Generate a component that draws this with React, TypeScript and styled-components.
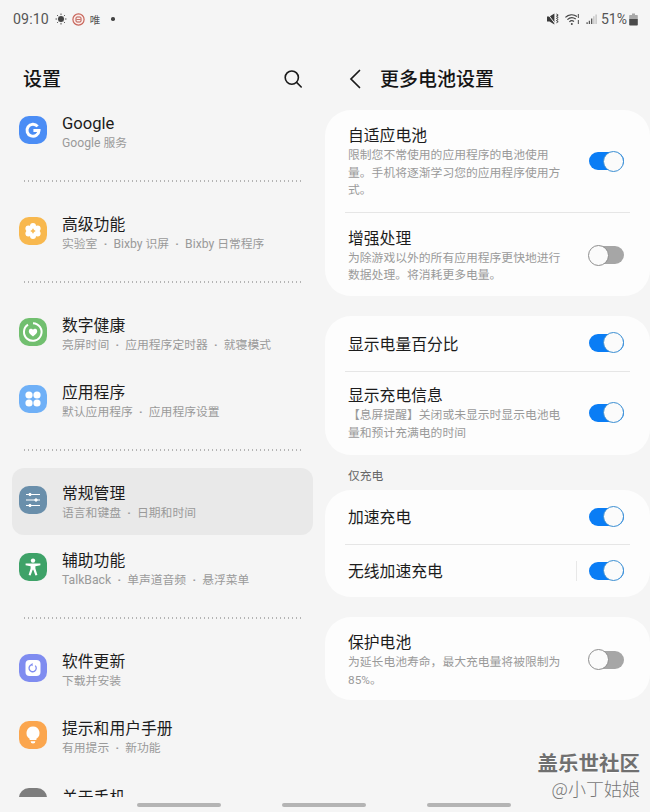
import React from "react";
import styled, { createGlobalStyle } from "styled-components";

const Global = createGlobalStyle`
  html, body { margin: 0; padding: 0; background: #f5f5f5; }
  body { font-family: Roboto, "Noto Sans CJK SC", sans-serif; }
  * { box-sizing: border-box; }
`;

const Page = styled.div`
  position: relative;
  width: 650px;
  height: 812px;
  display: flex;
  flex-direction: column;
  overflow: hidden;
  background: #f5f5f5;
`;

const StatusBar = styled.div`
  height: 38px;
  flex: none;
  display: flex;
  align-items: center;
  justify-content: space-between;
  padding: 0 12px 0 13px;
  color: #555;
`;
const StatusGroup = styled.div`
  display: flex;
  align-items: center;
`;
const Time = styled.span`
  font-size: 14.2px;
  letter-spacing: 0.1px;
  margin-right: 6px;
`;
const StatusChar = styled.span`
  font-size: 10.5px;
  font-family: "Noto Sans CJK SC", sans-serif;
  margin-left: 5px;
  color: #555;
`;
const Percent = styled.span`
  font-size: 14px;
  margin: 0 2px 0 4px;
`;
const StatusDot = styled.span`
  width: 3.5px;
  height: 3.5px;
  border-radius: 50%;
  background: #444;
  margin-left: 11px;
`;
const StatusIcon = styled.svg<{ $gap?: number }>`
  display: block;
  flex: none;
  margin-left: ${(p) => p.$gap ?? 0}px;
`;

const Panels = styled.div`
  flex: 1;
  min-height: 0;
  display: grid;
  grid-template-columns: 325px 325px;
  overflow: hidden;
`;
const Column = styled.div`
  display: flex;
  flex-direction: column;
  min-height: 0;
`;
const Header = styled.header`
  flex: none;
  height: 38px;
  margin-top: 22px;
  display: flex;
  align-items: center;
`;
const MainHeader = styled(Header)`
  padding: 0 22px 0 23px;
  justify-content: space-between;
`;
const DetailHeader = styled(Header)`
  padding-left: 24px;
  gap: 19px;
`;
const PageTitle = styled.h1`
  margin: 0 0 4px;
  font-family: "Noto Sans CJK SC", sans-serif;
  font-size: 19px;
  font-weight: 500;
  color: #151515;
`;

const MenuList = styled.div`
  padding: 0 12px;
  display: flex;
  flex-direction: column;
`;
const MenuRow = styled.div<{ $active?: boolean }>`
  flex: none;
  height: 67px;
  display: flex;
  align-items: center;
  gap: 15px;
  padding-left: 7px;
  border-radius: 12px;
  background: ${(p) => (p.$active ? "#e9e9e9" : "transparent")};
`;
const MenuText = styled.div`
  display: flex;
  flex-direction: column;
  min-height: 38px;
  padding-top: 3px;
`;
const MenuTitle = styled.div`
  font-size: 15.8px;
  line-height: 20px;
  color: #1c1c1c;
`;
const MenuSub = styled.div`
  font-size: 11.8px;
  line-height: 18px;
  color: #9a9a9a;
  white-space: pre;
`;
const LatinTitle = styled.span`
  font-size: 16.6px;
`;
const LatinSub = styled.span`
  font-size: 12.2px;
`;
const Separator = styled.span`
  display: inline-block;
  width: 16px;
  text-align: center;
  font-weight: 700;
`;
const SectionGap = styled.div`
  flex: none;
  height: 34px;
  display: flex;
  align-items: center;
  padding: 0 9px 2px 12px;
  &::before {
    content: "";
    flex: 1;
    height: 1.5px;
    background: repeating-linear-gradient(90deg, #b4b4b4 0 1.5px, transparent 1.5px 4px);
  }
`;
const AppIcon = styled.div<{ $bg: string }>`
  width: 28px;
  height: 28px;
  flex: none;
  margin-bottom: 3px;
  border-radius: 10px;
  background: ${(p) => p.$bg};
  display: flex;
  align-items: center;
  justify-content: center;
`;

const CardStack = styled.div`
  margin-top: 12px;
  display: flex;
  flex-direction: column;
`;
const Card = styled.section`
  background: #fdfdfd;
  border-radius: 26px;
  margin-bottom: 20px;
`;
const SettingRow = styled.div<{ $top?: number; $bottom?: number; $tall?: number }>`
  display: flex;
  align-items: center;
  justify-content: space-between;
  padding: ${(p) => p.$top ?? 0}px 26px ${(p) => p.$bottom ?? 0}px 23px;
  ${(p) => (p.$tall ? `height: ${p.$tall}px;` : "")}
`;
const RowRule = styled.div`
  height: 1px;
  margin: 0 20px;
  background: #e6e6e6;
`;
const SettingText = styled.div`
  width: 216px;
`;
const SettingTitle = styled.div<{ $nudge?: number }>`
  font-family: "Noto Sans CJK SC", sans-serif;
  font-size: 15.8px;
  line-height: 22px;
  color: #1c1c1c;
  padding-top: ${(p) => p.$nudge ?? 0}px;
`;
const SettingSub = styled.div`
  font-family: Roboto, "Noto Sans CJK SC", sans-serif;
  font-size: 11.8px;
  line-height: 17.6px;
  margin-top: 1px;
  color: #9a9a9a;
`;
const SwitchArea = styled.div`
  display: flex;
  align-items: center;
  margin-bottom: 1px;
`;
const VerticalBar = styled.div`
  width: 1px;
  height: 20px;
  background: #e8e8e8;
  margin-right: 12px;
`;
const Track = styled.div<{ $on: boolean }>`
  position: relative;
  width: 35px;
  height: 18px;
  border-radius: 9px;
  background: ${(p) => (p.$on ? "#0a7df5" : "#a6a6a6")};
`;
const Thumb = styled.div<{ $on: boolean }>`
  position: absolute;
  top: -1.5px;
  ${(p) => (p.$on ? "right: 0;" : "left: -1px;")}
  width: 21px;
  height: 21px;
  border-radius: 50%;
  background: #fbfbfb;
  border: 1.5px solid ${(p) => (p.$on ? "#3c8fd2" : "#8e8e8e")};
`;
const CategoryLabel = styled.div`
  font-family: "Noto Sans CJK SC", sans-serif;
  font-size: 11.8px;
  line-height: 16px;
  height: 35px;
  margin-top: -20px;
  padding: 12px 0 0 23px;
  color: #666;
`;

const NavBar = styled.div`
  flex: none;
  height: 15px;
  display: flex;
  align-items: center;
  padding: 0 0 0 137px;
  gap: 61px;
`;
const NavPill = styled.div`
  width: 84px;
  height: 4px;
  border-radius: 2px;
  background: #b4b4b4;
`;
const Watermark = styled.div`
  position: absolute;
  right: 10px;
  top: 748px;
  display: flex;
  flex-direction: column;
  align-items: flex-end;
  font-family: "Noto Sans CJK SC", sans-serif;
`;
const WatermarkBrand = styled.div`
  font-size: 20.5px;
  line-height: 28px;
  font-weight: 700;
  color: #707070;
  text-shadow: 0 1px 0 #fff;
`;
const WatermarkUser = styled.div`
  font-size: 18px;
  line-height: 24px;
  font-weight: 300;
  color: #777;
`;

const Toggle = ({ on, bar }: { on: boolean; bar?: boolean }) => (
  <SwitchArea>
    {bar && <VerticalBar />}
    <Track $on={on}>
      <Thumb $on={on} />
    </Track>
  </SwitchArea>
);

const W = "#fff";
const icons: Record<string, React.ReactNode> = {
  google: (
    <svg width="18" height="18" viewBox="0 0 18 18" fill="none">
      <path d="M13.6 5.4A6 6 0 1 0 15 9.6H9.4" stroke={W} strokeWidth="3" />
    </svg>
  ),
  advanced: (
    <svg width="20" height="20" viewBox="0 0 20 20">
      <g fill={W}>
        <circle cx="10" cy="5" r="3" />
        <circle cx="10" cy="15" r="3" />
        <circle cx="5.4" cy="7.5" r="3" />
        <circle cx="14.6" cy="7.5" r="3" />
        <circle cx="5.4" cy="12.5" r="3" />
        <circle cx="14.6" cy="12.5" r="3" />
        <circle cx="10" cy="10" r="4" />
      </g>
      <path d="M10 7.8v4.4M7.8 10h4.4" stroke="#f8b84e" strokeWidth="1.5" />
    </svg>
  ),
  health: (
    <svg width="22" height="22" viewBox="0 0 22 22" fill="none">
      <path d="M6 3.6A8.8 8.8 0 1 0 11 2.2" stroke={W} strokeWidth="2" />
      <path d="M11 15.4C7.6 13 6.8 11.6 6.8 10a2.3 2.3 0 0 1 4.2-1.3A2.3 2.3 0 0 1 15.2 10c0 1.6-.8 3-4.2 5.4z" fill={W} />
    </svg>
  ),
  apps: (
    <svg width="18" height="18" viewBox="0 0 18 18" fill={W}>
      <circle cx="5" cy="5" r="3.6" />
      <circle cx="13" cy="5" r="3.6" />
      <circle cx="5" cy="13" r="3.6" />
      <circle cx="13" cy="13" r="3.6" />
    </svg>
  ),
  general: (
    <svg width="18" height="18" viewBox="0 0 18 18" fill={W} stroke={W}>
      <path d="M2 3.5h14M2 9h14M2 14.5h14" strokeWidth="1.1" />
      <circle cx="6" cy="3.5" r="1.2" />
      <circle cx="12" cy="9" r="1.2" />
      <circle cx="6" cy="14.5" r="1.2" />
    </svg>
  ),
  access: (
    <svg width="20" height="20" viewBox="0 0 20 20" fill={W}>
      <circle cx="10" cy="3.6" r="2.2" />
      <path d="M2.6 6.4h14.8v1.9l-5 1v2.2l2 6.6-2 .5-2.1-5.8h-.6l-2.1 5.8-2-.5 2-6.6V9.3l-5-1z" />
    </svg>
  ),
  update: (
    <svg width="20" height="20" viewBox="0 0 20 20" fill="none">
      <rect x="2.5" y="2" width="15" height="16" rx="4" fill={W} />
      <path d="M9 6.6a3.6 3.6 0 1 0 3.2 1" stroke="#7f8cf0" strokeWidth="1.3" />
      <path d="M9.6 5v3.2L7.6 6.4z" fill="#7f8cf0" />
    </svg>
  ),
  tips: (
    <svg width="20" height="20" viewBox="0 0 20 20" fill={W}>
      <path d="M10 1.5a6.6 6.6 0 0 0-3.4 12.2V15h6.8v-1.3A6.6 6.6 0 0 0 10 1.5z" />
      <path d="M7.6 16.2h4.8a2.4 2.4 0 0 1-4.8 0z" />
    </svg>
  ),
  about: null,
};

type MenuItem = { key: string; bg: string; title: string; sub: string[]; active?: boolean };
const menu: MenuItem[][] = [
  [{ key: "google", bg: "#4b8df5", title: "Google", sub: ["Google 服务"] }],
  [{ key: "advanced", bg: "#f8b84e", title: "高级功能", sub: ["实验室", "Bixby 识屏", "Bixby 日常程序"] }],
  [
    { key: "health", bg: "#71bf6f", title: "数字健康", sub: ["亮屏时间", "应用程序定时器", "就寝模式"] },
    { key: "apps", bg: "#6fb0f7", title: "应用程序", sub: ["默认应用程序", "应用程序设置"] },
  ],
  [
    { key: "general", bg: "#6a8fab", title: "常规管理", sub: ["语言和键盘", "日期和时间"], active: true },
    { key: "access", bg: "#3ea268", title: "辅助功能", sub: ["TalkBack", "单声道音频", "悬浮菜单"] },
  ],
  [
    { key: "update", bg: "#7f8cf0", title: "软件更新", sub: ["下载并安装"] },
    { key: "tips", bg: "#fba64e", title: "提示和用户手册", sub: ["有用提示", "新功能"] },
    { key: "about", bg: "#7d7d7d", title: "关于手机", sub: [] },
  ],
];

const SubLine = ({ parts }: { parts: string[] }) => (
  <MenuSub>
    {parts.map((part, i) => (
      <React.Fragment key={i}>
        {i > 0 && <Separator>·</Separator>}
        {part.split(/([A-Za-z]+)/).map((run, j) =>
          j % 2 === 1 ? <LatinSub key={j}>{run}</LatinSub> : run
        )}
      </React.Fragment>
    ))}
  </MenuSub>
);

export default function App() {
  return (
    <Page>
      <Global />
      <StatusBar>
        <StatusGroup>
          <Time>09:10</Time>
          <StatusIcon width="12" height="12" viewBox="0 0 12 12">
            <circle cx="6" cy="6" r="3" fill="#444" />
            <path d="M6 .5v1.6M6 9.9v1.6M.5 6h1.6M9.9 6h1.6M2.1 2.1l1.1 1.1M8.8 8.8l1.1 1.1M2.1 9.9l1.1-1.1M8.8 3.2l1.1-1.1" stroke="#555" strokeWidth="1" />
          </StatusIcon>
          <StatusIcon $gap={5} width="13" height="13" viewBox="0 0 13 13" fill="none">
            <circle cx="6.5" cy="6.5" r="5.6" stroke="#c8655a" strokeWidth="1.2" fill="#fbeeec" />
            <rect x="4" y="4" width="5" height="5" rx="1" stroke="#b9554a" strokeWidth="1" />
            <path d="M4.5 6.5h4" stroke="#b9554a" strokeWidth=".8" />
          </StatusIcon>
          <StatusChar>唯</StatusChar>
          <StatusDot />
        </StatusGroup>
        <StatusGroup>
          <StatusIcon width="12" height="12" viewBox="0 0 12 12" fill="#3a3a3a">
            <path d="M0 3.6h2.6L7.4.4v11.2L2.6 8.4H0z" />
            <path d="M.6.8l7.6 10" stroke="#f5f5f5" strokeWidth="1" />
            <path d="M9.4 1l1.8 1.1-1.8 1.1 1.8 1.1-1.8 1.1 1.8 1.1-1.8 1.1 1.8 1.1-1.8 1.1" fill="none" stroke="#444" strokeWidth="1" />
          </StatusIcon>
          <StatusIcon $gap={6} width="15" height="13" viewBox="0 0 15 13" fill="none" stroke="#444" strokeWidth="1.2">
            <path d="M.4 4.4a9.6 9.6 0 0 1 11.6-1" />
            <path d="M2.4 6.6a6.6 6.6 0 0 1 8.4-.6" />
            <path d="M4.4 8.8a3.4 3.4 0 0 1 4.6-.3" />
            <circle cx="6.8" cy="11" r="1" fill="#444" stroke="none" />
            <path d="M13.4 1v4M13.4 7v4" stroke="#666" />
          </StatusIcon>
          <StatusIcon $gap={6} width="11" height="12" viewBox="0 0 12 12">
            <path d="M.5 9.5h1.4v2H.5zM3 8h1.4v3.5H3zM5.5 5.5h1.4v6H5.5z" fill="#555" />
            <path d="M8 3h1.2v8.5H8zM10.4 1h1.2v10.5h-1.2z" fill="#b9b9b9" />
          </StatusIcon>
          <Percent>51%</Percent>
          <StatusIcon width="9" height="13" viewBox="0 0 9 13">
            <path d="M3 .5h3v1.5h2.2a.6.6 0 0 1 .6.6V6H.2V2.6a.6.6 0 0 1 .6-.6H3z" fill="#a8a8a8" />
            <path d="M.2 6h8.6v5.8a.8.8 0 0 1-.8.8H1a.8.8 0 0 1-.8-.8z" fill="#4a4a4a" />
          </StatusIcon>
        </StatusGroup>
      </StatusBar>

      <Panels>
        <Column>
          <MainHeader>
            <PageTitle>设置</PageTitle>
            <svg width="20" height="20" viewBox="0 0 20 20" fill="none" stroke="#1a1a1a" strokeWidth="1.6">
              <circle cx="8.8" cy="8.6" r="6.6" />
              <path d="M13.6 13.4l4.6 4.6" strokeLinecap="round" />
            </svg>
          </MainHeader>
          <MenuList>
            {menu.map((section, i) => (
              <React.Fragment key={i}>
                {i > 0 && <SectionGap />}
                {section.map((item) => (
                  <MenuRow key={item.key} $active={item.active}>
                    <AppIcon $bg={item.bg}>{icons[item.key]}</AppIcon>
                    <MenuText>
                      <MenuTitle>
                        {item.key === "google" ? <LatinTitle>{item.title}</LatinTitle> : item.title}
                      </MenuTitle>
                      <SubLine parts={item.sub} />
                    </MenuText>
                  </MenuRow>
                ))}
              </React.Fragment>
            ))}
          </MenuList>
        </Column>

        <Column>
          <DetailHeader>
            <svg width="12" height="20" viewBox="0 0 12 20" fill="none" stroke="#1a1a1a" strokeWidth="1.7">
              <path d="M10.5 1.5L2 10l8.5 8.5" strokeLinecap="round" />
            </svg>
            <PageTitle>更多电池设置</PageTitle>
          </DetailHeader>
          <CardStack>
            <Card>
              <SettingRow $top={14} $bottom={12}>
                <SettingText>
                  <SettingTitle>自适应电池</SettingTitle>
                  <SettingSub>限制您不常使用的应用程序的电池使用量。手机将逐渐学习您的应用程序使用方式。</SettingSub>
                </SettingText>
                <Toggle on />
              </SettingRow>
              <RowRule />
              <SettingRow $top={14} $bottom={11}>
                <SettingText>
                  <SettingTitle>增强处理</SettingTitle>
                  <SettingSub>为除游戏以外的所有应用程序更快地进行数据处理。将消耗更多电量。</SettingSub>
                </SettingText>
                <Toggle on={false} />
              </SettingRow>
            </Card>
            <Card>
              <SettingRow $tall={55}>
                <SettingText>
                  <SettingTitle $nudge={2}>显示电量百分比</SettingTitle>
                </SettingText>
                <Toggle on />
              </SettingRow>
              <RowRule />
              <SettingRow $top={12} $bottom={13}>
                <SettingText>
                  <SettingTitle>显示充电信息</SettingTitle>
                  <SettingSub>【息屏提醒】关闭或未显示时显示电池电量和预计充满电的时间</SettingSub>
                </SettingText>
                <Toggle on />
              </SettingRow>
            </Card>
            <CategoryLabel>仅充电</CategoryLabel>
            <Card>
              <SettingRow $tall={54}>
                <SettingText>
                  <SettingTitle>加速充电</SettingTitle>
                </SettingText>
                <Toggle on />
              </SettingRow>
              <RowRule />
              <SettingRow $tall={52}>
                <SettingText>
                  <SettingTitle>无线加速充电</SettingTitle>
                </SettingText>
                <Toggle on bar />
              </SettingRow>
            </Card>
            <Card>
              <SettingRow $top={14} $bottom={11}>
                <SettingText>
                  <SettingTitle>保护电池</SettingTitle>
                  <SettingSub>为延长电池寿命，最大充电量将被限制为85%。</SettingSub>
                </SettingText>
                <Toggle on={false} />
              </SettingRow>
            </Card>
          </CardStack>
        </Column>
      </Panels>

      <NavBar>
        <NavPill />
        <NavPill />
        <NavPill />
      </NavBar>

      <Watermark>
        <WatermarkBrand>盖乐世社区</WatermarkBrand>
        <WatermarkUser>@小丁姑娘</WatermarkUser>
      </Watermark>
    </Page>
  );
}
